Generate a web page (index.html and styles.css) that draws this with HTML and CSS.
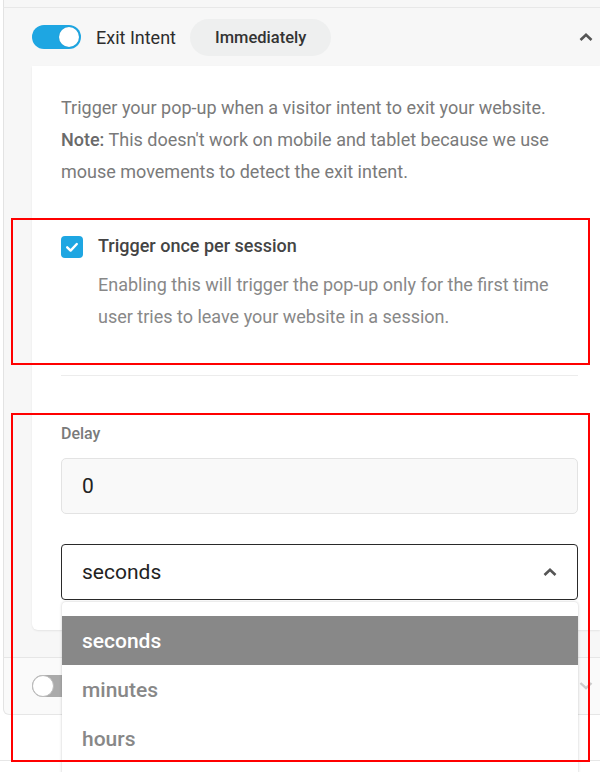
FILE: index.html
```html
<!DOCTYPE html>
<html lang="en">
<head>
<meta charset="utf-8">
<title>Exit Intent trigger</title>
<link rel="stylesheet" href="styles.css">
</head>
<body>
<div class="list">
  <div class="prev"></div>
  <section class="item item-open">
    <header class="item-head">
      <span class="switch switch-on"><span class="knob"></span></span>
      <span class="item-title">Exit Intent</span>
      <span class="pill">Immediately</span>
      <svg class="chev" width="14" height="8" viewBox="0 0 14 8"><polyline points="1.5,7 7,1.8 12.5,7" fill="none" stroke="#555" stroke-width="2.6"/></svg>
    </header>
    <div class="card">
      <p class="desc">Trigger your pop-up when a visitor intent to exit your website. <strong>Note:</strong> This doesn't work on mobile and tablet because we use mouse movements to detect the exit intent.</p>
      <div class="check-row">
        <span class="checkbox"><svg width="22" height="22" viewBox="0 0 22 22"><polyline points="6.2,11.3 9.6,14.6 15.8,8" fill="none" stroke="#fff" stroke-width="2.4" stroke-linecap="round" stroke-linejoin="round"/></svg></span>
        <div class="check-text">
          <div class="check-title">Trigger once per session</div>
          <p class="check-desc">Enabling this will trigger the pop-up only for the first time user tries to leave your website in a session.</p>
        </div>
      </div>
      <div class="divider"></div>
      <label class="field-label">Delay</label>
      <div class="input">0</div>
      <div class="select">
        <span>seconds</span>
        <svg width="14" height="8" viewBox="0 0 14 8"><polyline points="1.5,7 7,1.8 12.5,7" fill="none" stroke="#555" stroke-width="2.6"/></svg>
      </div>
    </div>
  </section>
  <section class="item item-closed">
    <span class="switch switch-off"><span class="knob"></span></span>
    <svg class="chev chev-faded" width="14" height="8" viewBox="0 0 14 8"><polyline points="1.5,1 7,6.2 12.5,1" fill="none" stroke="#ccc" stroke-width="2.4"/></svg>
  </section>
  <div class="next"></div>
</div>

<ul class="menu">
  <li class="opt opt-active">seconds</li>
  <li class="opt">minutes</li>
  <li class="opt">hours</li>
  <li class="opt"></li>
</ul>

<div class="mark mark-1"></div>
<div class="mark mark-2"></div>
</body>
</html>
```

FILE: styles.css
```css
* { box-sizing: border-box; }
html, body { margin: 0; padding: 0; }
body {
  width: 600px;
  height: 772px;
  overflow: hidden;
  position: relative;
  background: #fff;
  font-family: Roboto, "Noto Sans", "Liberation Sans", sans-serif;
  color: #333;
}
.list { margin-left: 3px; width: 597px; }
.prev {
  height: 8px;
  background: #f7f7f7;
  border-left: 1px solid #e3e3e3;
  border-bottom: 1px solid #e8e8e8;
}
.item-open {
  background: #f7f7f7;
  border-left: 1px solid #e3e3e3;
  padding: 0 0 27px 28px;
}
.item-head {
  height: 58px;
  display: flex;
  align-items: center;
  padding-right: 7px;
}
.switch {
  position: relative;
  display: inline-block;
  width: 49px;
  height: 24px;
  border-radius: 12px;
  flex: none;
}
.switch-on { background: #1ea6e2; }
.switch-on .knob {
  position: absolute;
  right: 2px;
  top: 2px;
  width: 20px;
  height: 20px;
  border-radius: 50%;
  background: #fff;
  box-shadow: 0 0 1px rgba(0,0,0,.2);
}
.switch-off { background: #aaa; height: 22px; width: 49px; }
.switch-off .knob {
  position: absolute;
  left: 0;
  top: 0;
  width: 22px;
  height: 22px;
  border-radius: 50%;
  background: #fff;
  border: 1px solid #bbb;
}
.item-title {
  margin-left: 15px;
  font-size: 18px;
  color: #2d2d2d;
}
.pill {
  margin-left: 14px;
  height: 37px;
  padding: 0 25px;
  border-radius: 19px;
  background: #eeefef;
  display: inline-flex;
  align-items: center;
  font-size: 16.5px;
  font-weight: 500;
  color: #333;
}
.chev { margin-left: auto; display: block; }
.card {
  background: #fff;
  border-radius: 0 0 0 6px;
  box-shadow: 0 1px 2px rgba(0,0,0,.08);
  padding: 26px 22px 30px 29px;
}
.desc {
  margin: 0;
  font-size: 18px;
  line-height: 32px;
  color: #7a7a7a;
}
.desc strong { font-weight: 500; color: #6a6a6a; }
.check-row {
  margin-top: 42px;
  display: flex;
  gap: 15px;
}
.checkbox {
  flex: none;
  width: 22px;
  height: 22px;
  margin-top: 6px;
  border-radius: 4px;
  background: #1ea6e2;
  display: block;
}
.checkbox svg { display: block; }
.check-title {
  font-size: 18px;
  font-weight: 500;
  line-height: 32px;
  color: #444;
}
.check-desc {
  margin: 7px 0 0;
  font-size: 18px;
  line-height: 32px;
  color: #888;
}
.divider {
  margin-top: 42px;
  height: 1px;
  background: #ececec;
}
.field-label {
  display: block;
  margin-top: 48px;
  font-size: 16px;
  line-height: 20px;
  font-weight: 500;
  color: #7a7a7a;
}
.input {
  margin-top: 14px;
  height: 56px;
  background: #f9f9f9;
  border: 1px solid #e3e3e3;
  border-radius: 5px;
  padding-left: 20px;
  display: flex;
  align-items: center;
  font-size: 21px;
  color: #222;
}
.select {
  margin-top: 30px;
  height: 56px;
  border: 1.5px solid #2a2a2a;
  border-radius: 4px;
  padding: 0 20px;
  display: flex;
  align-items: center;
  justify-content: space-between;
  font-size: 21px;
  color: #222;
}
.select svg { display: block; }
.item-closed {
  height: 58px;
  background: #fafafa;
  border-left: 1px solid #e3e3e3;
  border-top: 1px solid #e6e6e6;
  border-bottom: 1px solid #e6e6e6;
  border-bottom-left-radius: 6px;
  display: flex;
  align-items: center;
  padding: 0 7px 0 28px;
}
.next {
  margin-top: 45px;
  margin-left: -3px;
  border-top: 1px solid #e6e6e6;
  height: 20px;
}
.menu {
  position: absolute;
  left: 62px;
  top: 602px;
  width: 516px;
  height: 200px;
  margin: 0;
  padding: 14px 0 0;
  list-style: none;
  background: #fff;
  border-radius: 4px 4px 0 0;
  box-shadow: 0 0 3px rgba(0,0,0,.22);
}
.opt {
  height: 49px;
  padding-left: 20px;
  display: flex;
  align-items: center;
  font-size: 21px;
  font-weight: 500;
  color: #888;
}
.opt-active { background: #888; color: #fff; }
.mark {
  position: absolute;
  left: 11px;
  width: 579px;
  border: 2px solid #f00;
}
.mark-1 { top: 218px; height: 147px; }
.mark-2 { top: 413px; height: 349px; }
```
